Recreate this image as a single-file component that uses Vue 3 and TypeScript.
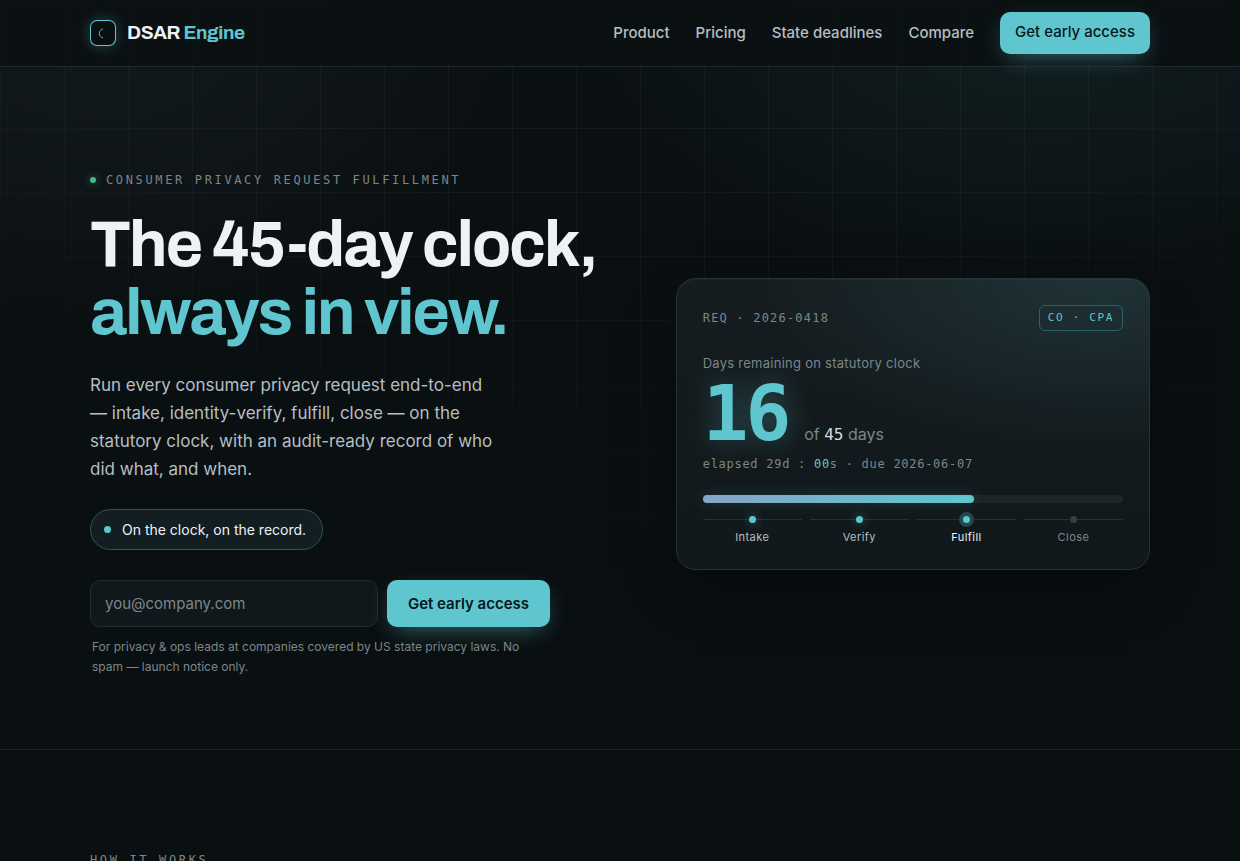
<script setup lang="ts">
import { ref } from 'vue'

interface NavLink {
  label: string
  href: string
}

interface Step {
  label: string
  state: 'done' | 'active' | 'todo'
}

const links: NavLink[] = [
  { label: 'Product', href: '#product' },
  { label: 'Pricing', href: '#pricing' },
  { label: 'State deadlines', href: '#deadlines' },
  { label: 'Compare', href: '#compare' },
]

const steps: Step[] = [
  { label: 'Intake', state: 'done' },
  { label: 'Verify', state: 'done' },
  { label: 'Fulfill', state: 'active' },
  { label: 'Close', state: 'todo' },
]

const totalDays = 45
const daysLeft = 16
const elapsed = totalDays - daysLeft
const progress = `${(elapsed / totalDays) * 100}%`
const email = ref('')
</script>

<template>
  <div class="page">
    <header class="nav">
      <div class="wrap nav-row">
        <a class="brand" href="#top">
          <span class="mark" aria-hidden="true">
            <svg viewBox="0 0 26 26" width="26" height="26">
              <path d="M13 9C10.900 9.300 9.300 11 9.300 13.400C9.300 15.800 10.900 17.500 13 17.800" />
            </svg>
          </span>
          <span class="brand-name">DSAR <span class="teal">Engine</span></span>
        </a>
        <nav class="links" aria-label="Main">
          <a v-for="link in links" :key="link.label" class="link" :href="link.href">{{ link.label }}</a>
          <a class="cta cta-nav" href="#access">Get early access</a>
        </nav>
      </div>
    </header>

    <main>
      <section id="top" class="hero">
        <div class="wrap hero-grid">
          <div class="copy">
            <p class="eyebrow"><span class="live"></span>Consumer privacy request fulfillment</p>
            <h1>The 45-day clock,<br /><span class="teal">always in view.</span></h1>
            <p class="lede">
              Run every consumer privacy request end-to-end — intake, identity-verify, fulfill, close — on the
              statutory clock, with an audit-ready record of who did what, and when.
            </p>
            <p class="pill"><span class="pill-dot"></span>On the clock, on the record.</p>
            <form id="access" class="form" @submit.prevent>
              <input v-model="email" type="email" placeholder="you@company.com" aria-label="Work email" />
              <button class="cta cta-form" type="submit">Get early access</button>
            </form>
            <p class="note">
              For privacy &amp; ops leads at companies covered by US state privacy laws. No spam — launch notice only.
            </p>
          </div>

          <article class="card">
            <div class="card-top">
              <span class="req">REQ · 2026-0418</span>
              <span class="tag">CO · CPA</span>
            </div>
            <p class="label">Days remaining on statutory clock</p>
            <div class="count">
              <span class="big">{{ daysLeft }}</span>
              <span class="of">of <b>{{ totalDays }}</b> days</span>
            </div>
            <p class="elapsed">elapsed {{ elapsed }}d : <b>00</b>s · due 2026-06-07</p>
            <div class="bar"><div class="fill" :style="{ width: progress }"></div></div>
            <ol class="steps">
              <li v-for="step in steps" :key="step.label" :class="['step', step.state]">
                <span class="rail"><span class="dot"></span></span>
                {{ step.label }}
              </li>
            </ol>
          </article>
        </div>
      </section>

      <section id="product" class="how">
        <div class="wrap">
          <h2 class="eyebrow">How it works</h2>
        </div>
      </section>
    </main>
  </div>
</template>

<style>
html {
  scrollbar-width: none;
}
body {
  margin: 0;
  background: #0a0f11;
}
</style>

<style scoped>
.page {
  --teal: #5fc6d0;
  --text: #eef2f4;
  --soft: #b6bfc1;
  --muted: #7b8789;
  --mono: 'DejaVu Sans Mono', monospace;
  position: relative;
  min-height: 100vh;
  color: var(--text);
  font-family: Inter, sans-serif;
  background:
    radial-gradient(ellipse 720px 420px at 84% 0%, rgba(95, 198, 208, 0.09), transparent 70%),
    radial-gradient(ellipse 640px 480px at 8% 0%, rgba(130, 165, 200, 0.08), transparent 70%),
    #0a0f11;
}
.page * {
  box-sizing: border-box;
}
.page::before {
  content: '';
  position: absolute;
  inset: 0;
  height: 720px;
  background:
    linear-gradient(rgba(255, 255, 255, 0.045) 1px, transparent 1px) 0 0 / 64px 64px,
    linear-gradient(90deg, rgba(255, 255, 255, 0.045) 1px, transparent 1px) 0 0 / 64px 64px;
  -webkit-mask-image: radial-gradient(ellipse 80% 80% at 50% 0%, #000 30%, transparent 100%);
  mask-image: radial-gradient(ellipse 80% 80% at 50% 0%, #000 30%, transparent 100%);
}
.wrap {
  width: calc(100% - 48px);
  max-width: 1060px;
  margin: 0 auto;
}
.teal {
  color: var(--teal);
}
.nav {
  position: relative;
  background: rgba(10, 15, 17, 0.86);
  border-bottom: 1px solid #1f282b;
}
.nav-row {
  display: flex;
  justify-content: space-between;
  align-items: center;
  padding: 12px 0;
}
.brand {
  display: flex;
  align-items: center;
  gap: 11px;
  color: var(--text);
  text-decoration: none;
}
.mark {
  display: block;
  width: 26px;
  height: 26px;
  border-radius: 7px;
  box-shadow:
    inset 0 0 0 1px var(--teal),
    0 0 14px rgba(95, 198, 208, 0.3);
}
.mark svg {
  display: block;
  fill: none;
  stroke: var(--teal);
  stroke-width: 0.9;
}
.brand-name {
  font: 700 19px/26px Archivo, 'Liberation Sans', Arial, sans-serif;
  letter-spacing: -0.02em;
}
.links {
  display: flex;
  align-items: center;
  gap: 26px;
}
.link {
  color: var(--soft);
  font-size: 15px;
  font-weight: 500;
  line-height: 24px;
  text-decoration: none;
}
.cta {
  border: 0;
  border-radius: 10px;
  background: var(--teal);
  color: #06181b;
  font-family: inherit;
  font-size: 15px;
  line-height: 24px;
  text-align: center;
  text-decoration: none;
  white-space: nowrap;
  cursor: pointer;
  box-shadow: 0 8px 24px -8px rgba(95, 198, 208, 0.55);
}
.cta-nav {
  padding: 8px 15px 10px;
  font-weight: 500;
}
.cta-form {
  padding: 0 21px;
  font-weight: 600;
}
.hero {
  position: relative;
  padding: 104px 0 72px;
  border-bottom: 1px solid #1a2326;
}
.hero-grid {
  display: grid;
  grid-template-columns: 1.1fr 1fr;
  gap: 64px;
  align-items: center;
}
p,
h1,
h2 {
  margin: 0;
}
.eyebrow {
  display: flex;
  align-items: center;
  gap: 10px;
  color: var(--muted);
  font: 400 12px/18px var(--mono);
  letter-spacing: 0.22em;
  text-transform: uppercase;
}
.live {
  width: 6px;
  height: 6px;
  border-radius: 50%;
  background: #46b982;
  box-shadow: 0 0 8px rgba(70, 185, 130, 0.6);
}
h1 {
  margin-top: 22px;
  font: 700 64px/68px Archivo, 'Liberation Sans', Arial, sans-serif;
  letter-spacing: -0.03em;
  white-space: nowrap;
}
.lede {
  max-width: 408px;
  margin-top: 24px;
  color: var(--soft);
  font-size: 17px;
  line-height: 28px;
}
.pill {
  display: flex;
  align-items: center;
  gap: 11px;
  width: fit-content;
  margin-top: 26px;
  padding: 8px 16px 8px 13px;
  border: 1px solid #2c575d;
  border-radius: 21px;
  background: #121e22;
  font-size: 14px;
  line-height: 23px;
}
.pill-dot {
  width: 7px;
  height: 7px;
  border-radius: 50%;
  background: var(--teal);
}
.form {
  display: flex;
  gap: 9px;
  max-width: 460px;
  height: 47px;
  margin-top: 30px;
}
.form input {
  flex: 1;
  min-width: 0;
  padding: 0 14px;
  border: 1px solid #232c2f;
  border-radius: 10px;
  outline: none;
  background: #11181b;
  color: var(--text);
  font: 400 15px/24px Inter, sans-serif;
}
.form input::placeholder {
  color: var(--muted);
  opacity: 1;
}
.note {
  max-width: 448px;
  margin-top: 10px;
  padding-left: 2px;
  color: var(--muted);
  font-size: 12px;
  line-height: 20px;
}
.card {
  padding: 26px;
  border: 1px solid #283134;
  border-radius: 20px;
  background:
    radial-gradient(ellipse 340px 170px at 90% 0%, rgba(95, 198, 208, 0.13), transparent 100%),
    linear-gradient(180deg, #161d20, #11181b);
  box-shadow:
    inset 0 1px 0 rgba(255, 255, 255, 0.04),
    0 24px 60px -20px rgba(0, 0, 0, 0.6);
}
.card-top {
  display: flex;
  justify-content: space-between;
  align-items: center;
}
.req {
  color: var(--muted);
  font: 400 12px/26px var(--mono);
  letter-spacing: 0.1em;
}
.tag {
  padding: 0 8px;
  border: 1px solid #2f6067;
  border-radius: 6px;
  color: var(--teal);
  font: 400 11px/24px var(--mono);
  letter-spacing: 0.15em;
}
.label {
  margin-top: 22px;
  color: var(--muted);
  font-size: 13px;
  line-height: 20px;
  letter-spacing: 0.02em;
}
.count {
  display: flex;
  align-items: baseline;
  gap: 16px;
  height: 78px;
  padding-top: 3px;
}
.big {
  color: var(--teal);
  font: 700 76px/76px var(--mono);
  letter-spacing: -0.04em;
  text-shadow: 0 0 28px rgba(95, 198, 208, 0.35);
}
.of {
  color: var(--muted);
  font-size: 16px;
}
.of b {
  color: #d5dbdd;
  font: 500 16px var(--mono);
}
.elapsed {
  margin-top: 3px;
  color: var(--muted);
  font: 400 12px/20px var(--mono);
  letter-spacing: 0.06em;
}
.elapsed b {
  color: var(--teal);
  font-weight: 400;
}
.bar {
  height: 8px;
  margin-top: 21px;
  border-radius: 4px;
  background: #1e2528;
}
.fill {
  height: 8px;
  border-radius: 4px;
  background: linear-gradient(90deg, #86a5c6, var(--teal));
  box-shadow: 0 0 14px rgba(95, 198, 208, 0.2);
}
.steps {
  display: grid;
  grid-template-columns: repeat(4, 1fr);
  gap: 8px;
  margin: 9px 0 0;
  padding: 0;
  list-style: none;
}
.step {
  color: var(--soft);
  font-size: 11px;
  line-height: 12px;
  letter-spacing: 0.04em;
  text-align: center;
}
.rail {
  display: flex;
  justify-content: center;
  align-items: center;
  height: 15px;
  margin-bottom: 4px;
  background: linear-gradient(#273033, #273033) 0 7px / 100% 1px no-repeat;
}
.dot {
  width: 7px;
  height: 7px;
  border-radius: 50%;
  background: var(--teal);
  box-shadow: 0 0 10px rgba(95, 198, 208, 0.5);
}
.active {
  color: var(--text);
}
.active .dot {
  box-shadow: 0 0 0 4px #23474d;
}
.todo {
  color: var(--muted);
}
.todo .dot {
  background: #353e41;
  box-shadow: none;
}
.how {
  position: relative;
  padding: 101px 0 24px;
}
</style>
